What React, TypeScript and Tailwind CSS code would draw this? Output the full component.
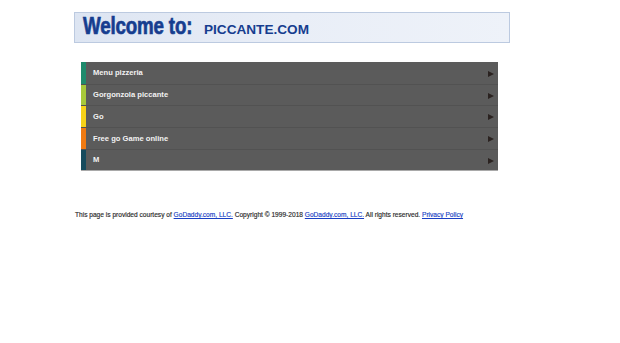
import React from "react";

const rows = [
  { label: "Menu pizzeria", color: "bg-[#1f8a6c]", h: "h-[22px]" },
  { label: "Gorgonzola piccante", color: "bg-[#a7c83a]", h: "h-[21px]" },
  { label: "Go", color: "bg-[#f6d218]", h: "h-[22px]" },
  { label: "Free go Game online", color: "bg-[#ef7a12]", h: "h-[22px]" },
  { label: "M", color: "bg-[#174b5d]", h: "h-[21px]" },
];

export default function App() {
  return (
    <div className="min-h-[343px] w-[620px] bg-white font-['Liberation_Sans',Arial,sans-serif]">
      <div className="flex flex-col pl-[74px] pt-[12px]">
        <div className="flex h-[31px] w-[436px] items-baseline border border-[#bccae0] bg-gradient-to-r from-[#dde5f2] via-[#e9eef7] to-[#eef2f9] pl-[8px] pt-[1px]">
          <span className="inline-block w-[112px] whitespace-nowrap">
            <span className="inline-block origin-left scale-x-[0.78] text-[24px] font-bold leading-[24px] tracking-[-0.2px] text-[#163d8f] [-webkit-text-stroke:0.7px_#163d8f]">
              Welcome to:
            </span>
          </span>
          <span className="ml-[9px] text-[13.6px] font-bold leading-[14px] text-[#163d8f]">PICCANTE.COM</span>
        </div>

        <div className="ml-[7px] mt-[19px] flex w-[417px] flex-col border-b border-[#a9a9a9] bg-[#5b5b5b]">
          {rows.map((r, i) => (
            <div
              key={r.label}
              className={`flex ${r.h} items-stretch ${i > 0 ? "border-t border-[#525252]" : ""}`}
            >
              <div className={`w-[5px] shrink-0 ${r.color}`} />
              <div className="flex flex-1 items-center pl-[7px] text-[7.6px] font-bold text-[#f2f2f2]">
                {r.label}
              </div>
              <div className="flex items-center pr-[4px] pt-[1px]">
                <div className="h-0 w-0 border-y-[3.5px] border-l-[6px] border-y-transparent border-l-[#2a2220]" />
              </div>
            </div>
          ))}
        </div>

        <div className="ml-[1px] mt-[40px] whitespace-nowrap text-[6.6px] leading-[8px] text-[#2a2a2a] [-webkit-text-stroke:0.15px_#2a2a2a]">
          This page is provided courtesy of{" "}
          <span className="text-[#1a3fc4] underline [-webkit-text-stroke:0.15px_#1a3fc4]">GoDaddy.com, LLC.</span> Copyright © 1999-2018{" "}
          <span className="text-[#1a3fc4] underline [-webkit-text-stroke:0.15px_#1a3fc4]">GoDaddy.com, LLC.</span> All rights reserved.{" "}
          <span className="text-[#1a3fc4] underline [-webkit-text-stroke:0.15px_#1a3fc4]">Privacy Policy</span>
        </div>
      </div>
    </div>
  );
}
